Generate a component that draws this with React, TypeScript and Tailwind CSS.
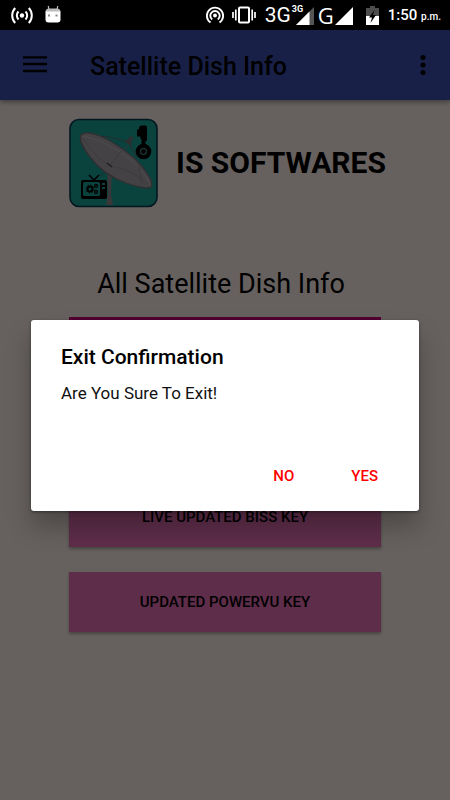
const menuItems = ["LIVE UPDATED BISS KEY", "UPDATED POWERVU KEY"];

export default function App() {
  return (
    <div className="flex min-h-screen flex-col bg-[#fff3ee] font-['Roboto',sans-serif] text-black">
      <StatusBar />
      <div className="relative flex grow flex-col">
        <AppBar />

        <main className="flex flex-col items-center">
          <div className="mt-[18px] flex items-center gap-[18px] pl-1">
            <Logo />
            <h2 className="text-[30px] leading-9 font-bold">IS SOFTWARES</h2>
          </div>

          <p className="mt-14 pr-2 text-[27px] leading-10">All Satellite Dish Info</p>

          <div className="mt-[13px] flex w-full flex-col gap-[25px] px-[69px]">
            <div className="mb-[85px] h-[60px] bg-[#d0007c]" />
            {menuItems.map((label) => (
              <button
                key={label}
                type="button"
                className="h-[60px] bg-[#eb70b9] text-[15px] font-medium shadow-[0_2px_3px_rgba(0,0,0,0.3)]"
              >
                {label}
              </button>
            ))}
          </div>
        </main>

        <ExitDialog />
      </div>
    </div>
  );
}

function StatusBar() {
  return (
    <div className="flex h-[30px] items-center justify-between bg-black pr-[9px] pl-[11px] text-white">
      <div className="flex items-center gap-3">
        <BroadcastIcon />
        <RobotIcon />
      </div>
      <div className="flex items-center">
        <HotspotIcon />
        <VibrateIcon />
        <div className="ml-[9px] flex items-center">
          <span className="text-[21px] leading-6">3G</span>
          <NetworkSignal />
        </div>
        <div className="ml-[4px] flex items-center">
          <span className="font-['Open_Sans',sans-serif] text-[22px] leading-6">G</span>
          <svg className="h-[19px] w-[19px]" viewBox="0 0 19 19" fill="currentColor">
            <path d="M19 1v18H1z" />
          </svg>
        </div>
        <BatteryIcon />
        <span className="ml-[9px] pt-0.5 text-[15px] leading-5 font-medium whitespace-nowrap">
          1:50 <span className="text-[10px]">p.m.</span>
        </span>
      </div>
    </div>
  );
}

function AppBar() {
  return (
    <header className="flex h-[70px] items-center bg-[#3f51b5] pr-[17px] pl-[23px] shadow-[0_2px_5px_rgba(0,0,0,0.4)]">
      <button type="button" aria-label="Menu">
        <svg className="block h-6 w-6" viewBox="0 0 24 24" fill="none" stroke="currentColor" strokeWidth="2.4">
          <path d="M0 4.4h24M0 11h24M0 18h24" />
        </svg>
      </button>
      <h1 className="ml-[43px] grow pt-1 text-[25px] leading-8 font-medium">Satellite Dish Info</h1>
      <button type="button" aria-label="More options">
        <svg className="block h-5 w-5" viewBox="0 0 20 20" fill="currentColor">
          <circle cx="10" cy="2.5" r="2.5" />
          <circle cx="10" cy="10" r="2.5" />
          <circle cx="10" cy="17.5" r="2.5" />
        </svg>
      </button>
    </header>
  );
}

function ExitDialog() {
  return (
    <div className="absolute inset-0 flex items-center justify-center bg-black/60 px-[31px]">
      <div
        role="alertdialog"
        aria-labelledby="exit-title"
        aria-describedby="exit-message"
        className="w-full rounded-[3px] bg-white px-[30px] pt-[21px] pb-3 shadow-[0_16px_24px_rgba(0,0,0,0.25),0_1px_3px_rgba(0,0,0,0.4)]"
      >
        <h2 id="exit-title" className="text-[21px] leading-8 font-medium">
          Exit Confirmation
        </h2>
        <p id="exit-message" className="mt-2 text-[17px] leading-6 text-[#111]">
          Are You Sure To Exit!
        </p>
        <div className="mt-[49px] flex justify-end gap-[35px] text-[15px] font-medium text-[#ff0000]">
          <button type="button" className="h-[45px] px-[11px]">
            NO
          </button>
          <button type="button" className="h-[45px] px-[11px]">
            YES
          </button>
        </div>
      </div>
    </div>
  );
}

function Logo() {
  return (
    <svg className="h-[90px] w-[90px]" viewBox="0 0 90 90" fill="none">
      <rect x="2" y="1.5" width="87" height="87" rx="9" fill="#1aa69c" stroke="#0b3a50" strokeWidth="1.6" />
      {/* dish mast */}
      <path d="M39 51l5 2-1 24 2 10h-7l2-11z" fill="#8f8b92" />
      <path d="M39 52l-7 6" stroke="#4b6a70" />
      {/* feed arm */}
      <path d="M24 18l17 1 20 5M61 26l8 13" stroke="#5d7478" strokeWidth="1.2" />
      <path d="M57 24l6-6 3 3-3 2 1 4-4-1z" fill="#777278" />
      {/* dish */}
      <path
        d="M13 17c4-5 17-1 31 7 15 9 28 20 35 31 4 6 6 12 4 14-3 2-14 0-25-4-14-5-27-14-36-26-7-9-11-18-9-22z"
        fill="#aaa5ad"
        stroke="#7b767e"
        strokeWidth="1.3"
      />
      <path d="M14 19c14-1 42 15 57 31 6 7 10 13 11 17" stroke="#c2bdc5" strokeWidth="1" />
      <path d="M42 48c6-10 12-16 18-20M42 48c-11-7-21-17-27-28M42 48c13 2 27 8 38 18M71 47l3 20" stroke="#918c94" strokeWidth="0.8" />
      <path d="M39 45l5 4" stroke="#4a454c" strokeWidth="1.2" />
      {/* key */}
      <path d="M71 9l2-1.5h5L79 9v14h-1.500v6h-4v-8h-1v-2.500H69v-7h2z" fill="#000" />
      <circle cx="75.500" cy="33.500" r="7.800" fill="#000" />
      <circle cx="75.500" cy="33.500" r="3" stroke="#45706f" strokeWidth="1.500" />
      {/* television */}
      <path d="M21 57l5 5 5-5" stroke="#000" strokeWidth="1.600" />
      <rect x="13" y="62" width="26" height="19" rx="2" fill="#000" />
      <rect x="15" y="64" width="17" height="14" rx="1.500" fill="#1aa69c" />
      <circle cx="22" cy="71" r="2.500" stroke="#000" strokeWidth="2" />
      <circle cx="22" cy="71" r="4" stroke="#000" strokeWidth="1" strokeDasharray="1.5 1.6" />
      <circle cx="28" cy="68" r="1.500" stroke="#000" strokeWidth="1.300" />
      <circle cx="28" cy="74" r="1.500" stroke="#000" strokeWidth="1.300" />
      <path d="M34 65h3v2h-3zM34 69h3v2h-3z" fill="#1aa69c" />
    </svg>
  );
}

function BroadcastIcon() {
  return (
    <svg className="h-[17px] w-[22px]" viewBox="0 0 22 17" fill="none" stroke="currentColor" strokeWidth="2">
      <circle cx="11" cy="8.5" r="2.2" fill="currentColor" stroke="none" />
      <path d="M7.5 4.5c-2.2 2.2-2.2 5.8 0 8M14.5 4.5c2.2 2.2 2.2 5.8 0 8M4.2 1c-4 4.2-4 10.8 0 15M17.8 1c4 4.2 4 10.8 0 15" />
    </svg>
  );
}

function RobotIcon() {
  return (
    <svg className="mb-0.5 h-[18px] w-[16px]" viewBox="0 0 16 18">
      <path d="M4 4.5L3.2 1M12 4.5l.8-3.5" stroke="#bbb" strokeWidth="1.2" />
      <path d="M.5 7q0-3.5 3.5-3.5h8q3.5 0 3.5 3.5z" fill="#bdbdbd" />
      <path d="M.5 6.500h15v8q0 3-3 3h-9q-3 0-3-3z" fill="#fff" />
      <path d="M3 9.500h2v2H3zM10.500 9.500h2v2h-2z" fill="#888" />
    </svg>
  );
}

function HotspotIcon() {
  return (
    <svg className="h-[18px] w-[18px]" viewBox="0 0 18 18" fill="none" stroke="currentColor" strokeWidth="1.9">
      <circle cx="9" cy="9.5" r="1.9" fill="currentColor" stroke="none" />
      <path d="M6.2 13.5a4.7 4.7 0 1 1 5.6 0M4.5 16.5a8.1 8.1 0 1 1 9 0" />
    </svg>
  );
}

function VibrateIcon() {
  return (
    <svg className="ml-2 h-[18px] w-[24px]" viewBox="0 0 24 18" fill="none" stroke="currentColor" strokeWidth="2">
      <rect x="7" y="1.5" width="10" height="15" rx="1" />
      <path d="M3.8 3.5v11M20.2 3.5v11M1 6v6M23 6v6" strokeWidth="1.7" />
    </svg>
  );
}

function NetworkSignal() {
  return (
    <span className="relative ml-[5px] block h-[19px] w-[18px]">
      <svg className="block h-[19px] w-[18px]" viewBox="0 0 18 19">
        <path d="M18 1v18H0z" fill="#555" />
        <path d="M13.5 5.5V19H0z" fill="#fff" />
      </svg>
      <span className="absolute -top-0.5 -left-1 bg-black text-[9px] leading-[10px] font-bold">3G</span>
    </span>
  );
}

function BatteryIcon() {
  return (
    <svg className="ml-[13px] h-[19px] w-[13px]" viewBox="0 0 13 19">
      <path d="M4 0h5v2h4v17H0V2h4z" fill="#4d4d4d" />
      <path d="M0 10h13v9H0z" fill="#fff" />
      <path d="M8.5 4L3 11.5h3L4.500 17 10 9H7z" fill="#000" />
    </svg>
  );
}
